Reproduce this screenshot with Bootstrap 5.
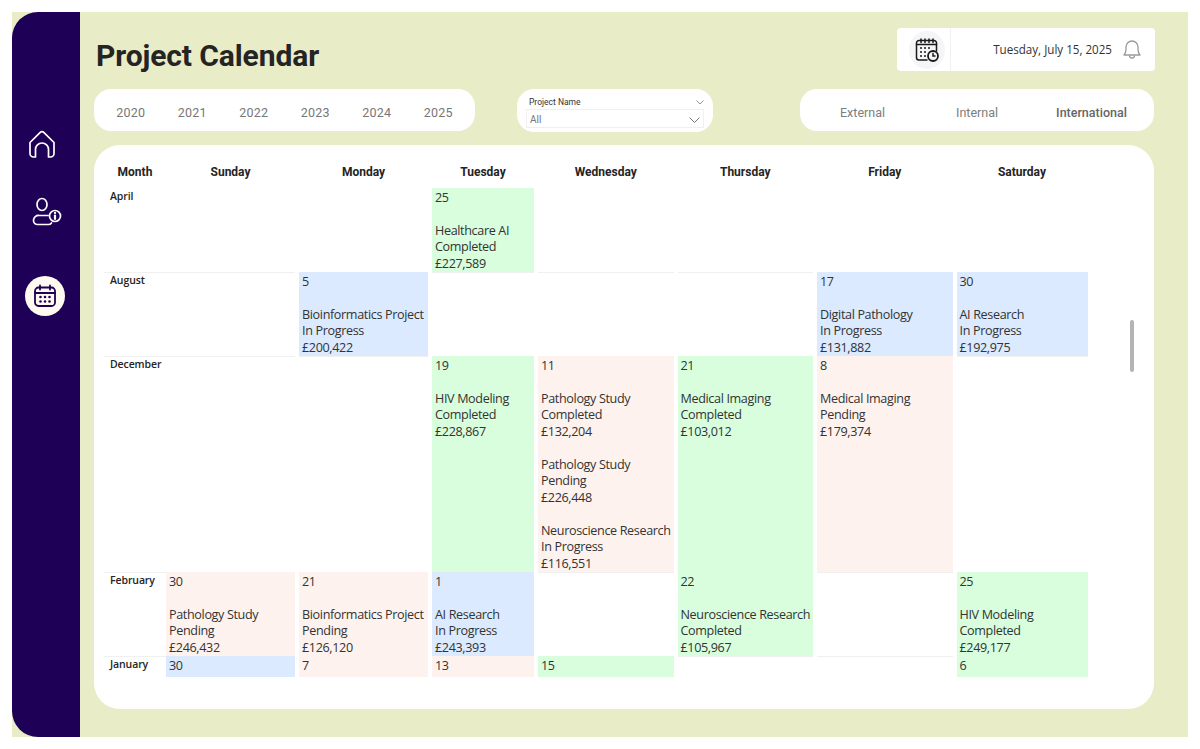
<!DOCTYPE html>
<html lang="en">
<head>
  <meta charset="UTF-8"/>
  <meta name="viewport" content="width=device-width, initial-scale=1.0"/>
  <title>Project Calendar</title>
  <link href="https://cdn.jsdelivr.net/npm/bootstrap@5.3.0/dist/css/bootstrap.min.css" rel="stylesheet"/>
  <style>
    body { background: #fff; overflow: hidden; font-family: "Open Sans", sans-serif; color: #252423; }
    .frame { margin: 12px; width: 1176px; height: 725px; background: #e8ecc7; overflow: hidden; }
    .side { width: 68px; background: #1f0057; padding-top: 112px; border-radius: 26px 0 0 26px; }
    .side-ico { height: 40px; }
    .side-home { margin-bottom: 28px; padding-right: 8px; }
    .side-user { margin-bottom: 44px; margin-left: 2px; }
    .side-cal { width: 40px; height: 40px; margin-left: 13px; background: #fffaf0; border-radius: 50%; }
    .main-area { padding: 16px 33px 0 14px; }
    .top-row { height: 61px; }
    .page-title { font: 700 30px/1 Roboto, sans-serif; color: #252423; margin: 13px 0 0 2px; letter-spacing: -.1px; }
    .date-box { width: 258px; height: 43px; background: #fff; border-radius: 4px; }
    .date-left { width: 54px; padding-left: 6px; border-right: 1px solid #f1f1f1; }
    .date-circle { width: 36px; height: 38px; background: #f5f5f7; border-radius: 50%; }
    .date-text { font-size: 13.5px; line-height: 1; width: 161px; text-align: right; color: #333; transform: scaleX(.86); transform-origin: right center; }
    .date-bell { margin-left: 10px; }
    .filters { height: 43px; margin-bottom: 13px; }
    .pill { background: #fff; border-radius: 17px; }
    .year-pill { width: 381px; height: 42px; padding: 6px 0 0 6px; }
    .year-item { width: 61.5px; text-align: center; font: 400 12.5px/1 Roboto, sans-serif; color: #777; letter-spacing: .25px; }
    .name-pill { width: 196px; height: 43px; margin-left: 42px; padding: 7px 9px 4px 9px; }
    .name-label { font: 400 8.5px/1 Roboto, sans-serif; color: #333; height: 13px; padding-left: 3px; }
    .name-box { height: 19px; border: 1px solid #f0f0f0; font: 400 10px/1 Roboto, sans-serif; color: #777; padding: 2px 3px 0 3px; }
    .type-pill { width: 354px; height: 42px; margin-left: 87px; padding-top: 6px; }
    .type-item { width: 114.5px; text-align: center; font: 400 12.5px/1 Roboto, sans-serif; color: #7d7d7d; }
    .type-item.on { color: #666; font-weight: 500; }
    .cal-wrap { position: relative; height: 564px; margin-right: 1px; background: #fff; border-radius: 26px; padding: 14px 0 0 10px; }
    .cal-grid { display: grid; grid-template-columns: 58px 129px 129px 102px 135.5px 135.5px 135.5px 131px; column-gap: 4px; width: 970px; }
    .cal-head { font: 700 12px/26px Roboto, sans-serif; text-align: center; color: #252423; height: 29px; }
    .cal-head.first { margin-right: -4px; }
    .cal-body { height: 489px; overflow: hidden; }
    .cal-cell { border-top: 1px solid #f0f0f0; font-size: 12.6px; line-height: 16.5px; padding: .5px 0 0 3px; letter-spacing: -.36px; white-space: nowrap; color: #333; }
    .cal-cell.month { font: 600 10.5px/15px "Open Sans", sans-serif; letter-spacing: -.1px; padding: 0 0 0 6px; margin-right: -4px; color: #252423; }
    .row-first .cal-cell { border-top-color: transparent; }
    .row-short .cal-cell { min-height: 22px; }
    .tint-g { background: #d8fedd; border-top-color: #d8fedd; }
    .tint-b { background: #dbeafe; border-top-color: #dbeafe; }
    .tint-p { background: #fef2ee; border-top-color: #fef2ee; }
    .row-group { display: contents; }
    .scroll-thumb { position: absolute; left: 1036px; top: 175px; width: 4px; height: 52px; background: #b4b4b4; border-radius: 2px; }
  </style>
</head>
<body>
  <div class="frame d-flex">
    <div class="side flex-shrink-0">
      <div class="side-ico side-home d-flex justify-content-center align-items-center">
        <svg width="30" height="30" viewBox="0 0 30 30" fill="none" stroke="#fff" stroke-width="1.7" stroke-linejoin="round" stroke-linecap="round"><path d="M3 13.5 13 3.6a3 3 0 0 1 4 0l10 9.9v11a3.5 3.5 0 0 1-3.500 3.500h-2V20.500a6.500 6.500 0 0 0-13 0V28h-2A3.500 3.500 0 0 1 3 24.500z"/></svg>
      </div>
      <div class="side-ico side-user d-flex justify-content-center align-items-center">
        <svg width="30" height="30" viewBox="0 0 30 30" fill="none" stroke="#fff" stroke-width="1.7" stroke-linecap="round"><ellipse cx="10" cy="7.500" rx="5" ry="6"/><path d="M16 18.500H7a5 5 0 0 0-5.500 4.500v.5a4 4 0 0 0 4 4H16a4 4 0 0 0 3.500-1.500"/><circle cx="23" cy="19" r="5.500"/><path d="M23 18.500v3.500" stroke-width="2.200"/><path d="M23 15.800v.3" stroke-width="2.200"/></svg>
      </div>
      <div class="side-cal d-flex justify-content-center align-items-center">
        <svg width="24" height="24" viewBox="0 0 24 24" fill="none" stroke="#1f0057" stroke-width="1.8" stroke-linecap="round"><rect x="2" y="3.500" width="20" height="18.500" rx="3.500"/><path d="M2 9h20M7 1.500v4M17 1.500v4"/><g fill="#1f0057" stroke="none"><circle cx="7.500" cy="13" r="1.300"/><circle cx="12" cy="13" r="1.300"/><circle cx="16.500" cy="13" r="1.300"/><circle cx="7.500" cy="17.500" r="1.300"/><circle cx="12" cy="17.500" r="1.300"/><circle cx="16.500" cy="17.500" r="1.300"/></g></svg>
      </div>
    </div>

    <div class="main-area flex-grow-1">
      <div class="top-row d-flex justify-content-between align-items-start">
        <h1 class="page-title">Project Calendar</h1>
        <div class="date-box d-flex align-items-center">
          <div class="date-left h-100 d-flex justify-content-center align-items-center">
            <div class="date-circle d-flex justify-content-center align-items-center">
              <svg width="24" height="24" viewBox="0 0 24 24" fill="none" stroke="#1a1a1a" stroke-width="1.500" stroke-linecap="round"><path d="M12 22H4a2.500 2.500 0 0 1-2.500-2.500V5A2.500 2.500 0 0 1 4 2.500h15A2.500 2.500 0 0 1 21.500 5v8"/><path d="M6 1v3.500M10 1v3.500M14 1v3.500M18 1v3.500M1.500 6.500h20"/><g fill="#1a1a1a" stroke="none"><circle cx="6" cy="10" r="1"/><circle cx="10" cy="10" r="1"/><circle cx="14" cy="10" r="1"/><circle cx="6" cy="14" r="1"/><circle cx="10" cy="14" r="1"/><circle cx="6" cy="18" r="1"/><circle cx="10" cy="18" r="1"/></g><circle cx="18" cy="18" r="5" fill="#f5f5f7" stroke-width="1.800"/><path d="M18 15.500V18h2"/></svg>
            </div>
          </div>
          <div class="date-text">Tuesday, July 15, 2025</div>
          <svg class="date-bell" width="20" height="21" viewBox="0 0 20 21" fill="none" stroke="#9a9a9a" stroke-width="1.300" stroke-linejoin="round"><path d="M2 16c1.500-1.500 2-3 2-5.500V8a6 6 0 0 1 12 0v2.500c0 2.500.5 4 2 5.500z"/><path d="M7.500 16.500a2.500 2.500 0 0 0 5 0"/></svg>
        </div>
      </div>

      <div class="filters d-flex align-items-start">
        <div class="pill year-pill d-flex align-items-center" id="years"></div>
        <div class="pill name-pill">
          <div class="name-label d-flex justify-content-between align-items-center">Project Name
            <svg width="8" height="5" viewBox="0 0 8 5" fill="none" stroke="#777" stroke-width=".8"><path d="M.5.500 4 4 7.500.5"/></svg>
          </div>
          <div class="name-box d-flex justify-content-between align-items-center">All
            <svg width="11" height="6" viewBox="0 0 11 6" fill="none" stroke="#666" stroke-width=".9"><path d="M.5.500 5.500 5.500 10.500.5"/></svg>
          </div>
        </div>
        <div class="pill type-pill d-flex align-items-center justify-content-center">
          <div class="type-item">External</div>
          <div class="type-item">Internal</div>
          <div class="type-item on">International</div>
        </div>
      </div>

      <div class="cal-wrap">
        <div class="cal-grid" id="calHead"></div>
        <div class="cal-body"><div class="cal-grid" id="calBody"></div></div>
        <div class="scroll-thumb"></div>
      </div>
    </div>
  </div>

  <script src="https://cdn.jsdelivr.net/npm/bootstrap@5.3.0/dist/js/bootstrap.bundle.min.js"></script>
  <script>
    const days = ["Sunday", "Monday", "Tuesday", "Wednesday", "Thursday", "Friday", "Saturday"];

    // cell: day index -> [tint, date, ...lines of text]
    const calendar = [
      { month: "April", cells: { 2: ["g", 25, "Healthcare AI", "Completed", "£227,589"] } },
      { month: "August", cells: {
        1: ["b", 5, "Bioinformatics Project", "In Progress", "£200,422"],
        5: ["b", 17, "Digital Pathology", "In Progress", "£131,882"],
        6: ["b", 30, "AI Research", "In Progress", "£192,975"]
      } },
      { month: "December", cells: {
        2: ["g", 19, "HIV Modeling", "Completed", "£228,867"],
        3: ["p", 11, "Pathology Study", "Completed", "£132,204", "", "Pathology Study", "Pending", "£226,448", "", "Neuroscience Research", "In Progress", "£116,551"],
        4: ["g", 21, "Medical Imaging", "Completed", "£103,012"],
        5: ["p", 8, "Medical Imaging", "Pending", "£179,374"]
      } },
      { month: "February", cells: {
        0: ["p", 30, "Pathology Study", "Pending", "£246,432"],
        1: ["p", 21, "Bioinformatics Project", "Pending", "£126,120"],
        2: ["b", 1, "AI Research", "In Progress", "£243,393"],
        4: ["g", 22, "Neuroscience Research", "Completed", "£105,967"],
        6: ["g", 25, "HIV Modeling", "Completed", "£249,177"]
      } },
      { month: "January", short: true, cells: { 0: ["b", 30], 1: ["p", 7], 2: ["p", 13], 3: ["g", 15], 6: ["g", 6] } }
    ];

    document.getElementById("years").innerHTML = [2020, 2021, 2022, 2023, 2024, 2025]
      .map(y => `<div class="year-item">${y}</div>`).join("");

    document.getElementById("calHead").innerHTML = `<div class="cal-head first">Month</div>` +
      days.map(d => `<div class="cal-head">${d}</div>`).join("");

    const body = document.getElementById("calBody");
    calendar.forEach((row, r) => {
      const group = document.createElement("div");
      group.className = "row-group" + (r === 0 ? " row-first" : "") + (row.short ? " row-short" : "");
      let html = `<div class="cal-cell month">${row.month}</div>`;
      days.forEach((d, i) => {
        const cell = row.cells[i];
        if (!cell) { html += `<div class="cal-cell"></div>`; return; }
        const [t, date, ...lines] = cell;
        const text = lines.length ? `<br><br>${lines.join("<br>")}` : "";
        html += `<div class="cal-cell tint-${t}">${date}${text}</div>`;
      });
      group.innerHTML = html;
      body.appendChild(group);
    });
  </script>
</body>
</html>
